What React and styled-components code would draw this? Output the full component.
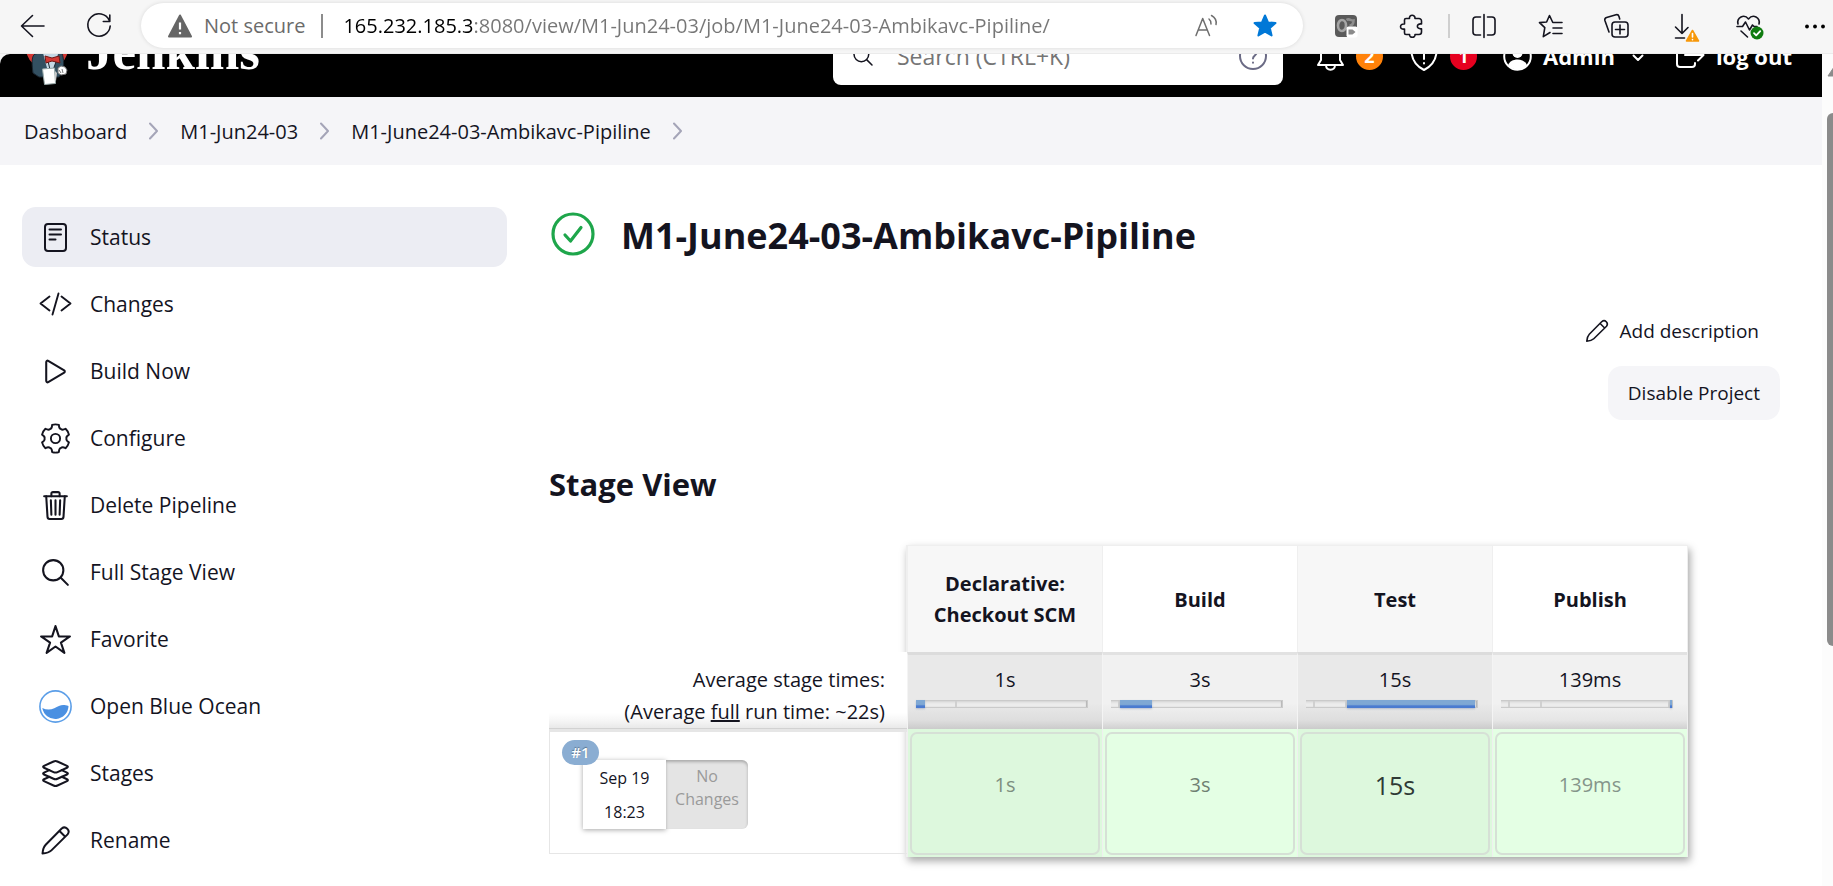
import React from "react";
import styled, { createGlobalStyle } from "styled-components";
import {
  IoPlayOutline,
  IoTrashOutline,
  IoSearchOutline,
  IoStarOutline,
  IoLayersOutline,
} from "react-icons/io5";

const ink = "#14141f";

const GlobalStyle = createGlobalStyle`
  *, *::before, *::after { box-sizing: border-box; }
  body {
    margin: 0;
    background: #fff;
    color: ${ink};
    font-family: "Open Sans", "Noto Sans", sans-serif;
    font-size: 20px;
  }
  button, input { font: inherit; color: inherit; }
  a { color: inherit; text-decoration: none; }
`;

/* ---------- browser chrome ---------- */

const BrowserWindow = styled.div`
  display: flex;
  flex-direction: column;
  height: 100vh;
  overflow: hidden;
  background: #f6f6f6;
`;

const Toolbar = styled.div`
  flex: none;
  display: flex;
  align-items: center;
  height: 54px;
  padding: 0 7px 2px 20px;
  border-bottom: 1px solid #ebebeb;
`;

const ToolButton = styled.button`
  display: flex;
  flex: none;
  padding: 0;
  border: 0;
  background: none;
  cursor: pointer;
  svg { display: block; overflow: visible; }
`;

const NavButtons = styled.div`
  display: flex;
  gap: 43px;
  margin-right: 30px;
`;

const ToolGroup = styled.div`
  display: flex;
  align-items: center;
  gap: 42px;
  margin-left: ${(p) => p.$before}px;
`;

const ToolDivider = styled.span`
  width: 2px;
  height: 24px;
  margin-left: 24px;
  background: #cfcfcf;
`;

const AddressBar = styled.div`
  flex: 1;
  min-width: 0;
  display: flex;
  align-items: center;
  height: 45px;
  padding: 0 26px 0 27px;
  border-radius: 23px;
  background: #fff;
  box-shadow: 0 0 4px rgba(0, 0, 0, 0.12);
`;

const Security = styled.button`
  display: flex;
  align-items: center;
  gap: 12px;
  flex: none;
  padding: 0 16px 0 0;
  border: 0;
  border-right: 2px solid #8c8c8c;
  background: none;
  color: #6b6b6b;
  line-height: 24px;
`;

const AddressInput = styled.input`
  flex: 1;
  min-width: 0;
  padding: 0;
  margin-left: 20px;
  border: 0;
  outline: 0;
  color: transparent;
  background: linear-gradient(to right, #000 130px, #767676 130px);
  background-clip: text;
  -webkit-background-clip: text;
`;

const AddressActions = styled.div`
  display: flex;
  gap: 34px;
`;

/* ---------- page viewport ---------- */

const Viewport = styled.div`
  flex: 1;
  min-height: 0;
  display: flex;
  overflow: hidden;
  border-top-left-radius: 10px;
  background: #fff;
`;

const Page = styled.div`
  flex: 1;
  min-width: 0;
`;

const ScrollTrack = styled.div`
  flex: none;
  width: 11px;
  padding: 12px 0 0 5px;
  overflow: hidden;
  background: #fcfcfc;
  svg { display: block; }
`;

const ScrollThumb = styled.div`
  width: 12px;
  height: 65%;
  margin-top: 36px;
  border-radius: 6px;
  background: #8b8b8b;
`;

const Header = styled.header`
  display: flex;
  align-items: center;
  height: 82px;
  margin-top: -39px;
  padding: 0 30px 0 24px;
  background: #000;
  color: #fff;
`;

const Brand = styled.a`
  display: flex;
  align-items: flex-start;
  gap: 6px;
  font: bold 53px/60px "Liberation Serif", serif;
`;

const SearchBox = styled.label`
  display: flex;
  align-items: center;
  gap: 22px;
  width: 450px;
  height: 58px;
  margin-left: auto;
  padding: 0 16px 0 18px;
  border-radius: 8px;
  background: #fff;
  color: ${ink};
`;

const SearchInput = styled.input`
  flex: 1;
  min-width: 0;
  padding: 0;
  border: 0;
  outline: 0;
  background: none;
  font-size: 23px;
  &::placeholder { color: #757575; opacity: 1; }
`;

const HeaderLink = styled.a`
  display: flex;
  align-items: center;
  gap: 11px;
  margin-left: ${(p) => p.$before}px;
  font-size: 22px;
  font-weight: 700;
  svg { display: block; }
`;

const Count = styled.span`
  width: 27px;
  height: 27px;
  border-radius: 50%;
  background: ${(p) => p.$color};
  font-size: 18px;
  line-height: 27px;
  text-align: center;
`;

const Breadcrumbs = styled.nav`
  display: flex;
  align-items: center;
  gap: 22px;
  height: 68px;
  padding-left: 24px;
  background: #f5f5f8;
  font-weight: 500;
`;

const Body = styled.div`
  display: flex;
  align-items: flex-start;
  gap: 42px;
  padding: 42px 42px 0 22px;
`;

/* ---------- sidebar ---------- */

const Sidebar = styled.nav`
  flex: none;
  display: flex;
  flex-direction: column;
  gap: 7px;
  width: 485px;
`;

const Task = styled.a`
  display: flex;
  align-items: center;
  gap: 18px;
  height: 60px;
  padding-left: 17px;
  border-radius: 14px;
  background: ${(p) => (p.$active ? "#ecedf3" : "transparent")};
  font-size: 21px;
  font-weight: 500;
  svg { width: 33px; height: 33px; flex: none; }
`;

/* ---------- main panel ---------- */

const Main = styled.main`
  flex: 1;
  min-width: 0;
`;

const TitleRow = styled.div`
  display: flex;
  align-items: center;
  gap: 24px;
  height: 54px;
`;

const Title = styled.h1`
  margin: 0;
  padding-top: 4px;
  font-size: 36px;
  line-height: 54px;
  font-weight: 700;
`;

const Actions = styled.div`
  display: flex;
  flex-direction: column;
  align-items: flex-end;
  gap: 8px;
  margin: 43px 0;
  font-size: 19px;
  font-weight: 500;
`;

const ActionLink = styled.a`
  display: flex;
  align-items: center;
  gap: 10px;
  height: 54px;
  padding: 0 21px;
  svg { width: 26px; height: 26px; }
`;

const ActionButton = styled.button`
  height: 54px;
  padding: 0 20px;
  border: 0;
  border-radius: 14px;
  background: #f5f5f8;
  font-weight: 500;
`;

const SectionTitle = styled.h2`
  margin: 0 0 40px;
  font-size: 31px;
  line-height: 42px;
  font-weight: 700;
`;

const StageFrame = styled.div`
  position: relative;
  width: 1138px;
  /* raised card behind the stage columns */
  &::before {
    content: "";
    position: absolute;
    inset: 0 -1px 0 357px;
    border: 1px solid #efefef;
    background: #f1f1f1;
    box-shadow: 2px 4px 8px rgba(0, 0, 0, 0.35);
  }
`;

const StageTable = styled.table`
  position: relative;
  width: 100%;
  table-layout: fixed;
  border-collapse: separate;
  border-spacing: 0;
  td, th { padding: 0; }
`;

const LabelCol = styled.col`
  width: 358px;
`;

const StageHead = styled.th`
  height: 107px;
  border: 1px solid #efefef;
  border-width: 1px 0 0 1px;
  background: ${(p) => (p.$odd ? "#f7f7f7" : "#fff")};
  font-size: 20px;
  line-height: 31px;
  font-weight: 700;
`;

const AverageLabel = styled.th`
  height: 77px;
  border-bottom: 1px solid #d2d2d2;
  background: linear-gradient(to bottom, #fff 80%, #f6f6f6 90%, #e9e9e9);
  text-align: right;
  line-height: 32px;
  font-weight: 400;
  div { padding: 12px 22px 0 0; }
`;

const AverageCell = styled.td`
  border-top: 3px solid ${(p) => (p.$odd ? "#dcdcdc" : "#e2e2e2")};
  border-left: 1px solid #f4f4f4;
  background: ${(p) =>
    p.$odd
      ? "linear-gradient(to bottom, #e9e9e9 65%, #dedede 88%, #cbcbcb)"
      : "linear-gradient(to bottom, #f1f1f1 65%, #e6e6e6 88%, #d0d0d0)"};
  vertical-align: top;
  text-align: center;
  line-height: 32px;
`;

const AverageTime = styled.div`
  padding-top: 9px;
`;

const Track = styled.div`
  display: flex;
  height: 8px;
  margin: 4px 14px 0 8px;
  border: 1px solid #cacaca;
  border-width: 1px 1px 1px 0;
  background: linear-gradient(to bottom, #dadada, #ececec 50%);
  box-shadow: inset -1px 0 1px #b5b5b5;
`;

const Lead = styled.span`
  height: 6px;
  border-right: 2px solid #d0d0d0;
`;

const Fill = styled.span`
  height: 8px;
  margin-top: -1px;
  background: linear-gradient(to bottom, #7fa8d4 55%, #4a7bd0 75%);
  box-shadow: 0 1px 2px rgba(60, 90, 150, 0.3);
`;

const RunLabel = styled.td`
  height: 128px;
  vertical-align: top;
`;

const RunInfo = styled.div`
  position: relative;
  height: 125px;
  padding: 28px 0 0 33px;
  border: 1px solid #e6e6e6;
  border-width: 3px 0 1px 1px;
`;

const RunBadge = styled.a`
  position: absolute;
  top: 8px;
  left: 12px;
  width: 37px;
  height: 25px;
  border-radius: 13px;
  background: #8aadd2;
  color: #fff;
  font-size: 15px;
  line-height: 25px;
  font-weight: 600;
  text-align: center;
  text-shadow: 0 -1px 1px rgba(0, 0, 0, 0.35);
`;

const RunBoxes = styled.div`
  display: flex;
  height: 69px;
  text-align: center;
  font-size: 16px;
`;

const RunDate = styled.div`
  width: 83px;
  padding-top: 1px;
  background: #fff;
  box-shadow: 0 1px 5px rgba(0, 0, 0, 0.35);
  line-height: 34px;
`;

const RunChanges = styled.div`
  width: 82px;
  padding-top: 5px;
  border-radius: 0 6px 6px 0;
  background: #e4e4e4;
  box-shadow: inset 0 2px 3px rgba(0, 0, 0, 0.25);
  color: #9a9a9a;
  line-height: 23px;
`;

const RunCell = styled.td`
  padding: 0;
  border-left: 1px solid #efefef;
  background: ${(p) => (p.$odd ? "#ddf8dd" : "#e4ffe4")};
  vertical-align: top;
`;

const RunResult = styled.div`
  height: 123px;
  margin: 3px 2px 2px;
  padding-top: 36px;
  border: 2px solid #d6e0d6;
  border-radius: 7px;
  background: ${(p) => (p.$odd ? "#ddf8dd" : "#e4ffe4")};
  color: ${(p) => p.$tone};
  font-size: ${(p) => (p.$large ? 25 : 20)}px;
  line-height: 30px;
  text-align: center;
`;

/* ---------- drawings ---------- */

const Line = ({ size = 24, box = 24, width = 1.6, children, ...rest }) => (
  <svg
    width={size}
    height={size}
    viewBox={`0 0 ${box} ${box}`}
    fill="none"
    stroke="currentColor"
    strokeWidth={width}
    strokeLinecap="round"
    strokeLinejoin="round"
    aria-hidden="true"
    {...rest}
  >
    {children}
  </svg>
);

const StatusIcon = () => (
  <Line box={33} width={2}>
    <rect x="6" y="3" width="21" height="27" rx="3" />
    <path d="M10.500 8.500h11.500M10.500 13.500h11.500M10.500 18.500h6" />
  </Line>
);

const ChangesIcon = () => (
  <Line box={33} width={1.9}>
    <path d="M10.500 8.500L1.500 15.500l9 7M22.500 8.500l9 7-9 7M19.500 5.500l-6 21" />
  </Line>
);

const gearPath = () => {
  const at = (deg, r) => {
    const a = (deg * Math.PI) / 180;
    return `${(16.5 + r * Math.sin(a)).toFixed(2)} ${(16.5 - r * Math.cos(a)).toFixed(2)}`;
  };
  let d = "";
  for (let k = 0; k < 360; k += 60) {
    d += `${k ? "L" : "M"}${at(k - 14, 14)}Q${at(k, 14.6)} ${at(k + 14, 14)}`;
    d += `Q${at(k + 19, 10.6)} ${at(k + 30, 10.9)}Q${at(k + 41, 10.6)} ${at(k + 46, 14)}`;
  }
  return `${d}Z`;
};

const GearIcon = () => (
  <Line box={33} width={1.9}>
    <path d={gearPath()} />
    <circle cx="16.5" cy="16.5" r="4.6" />
  </Line>
);

const PencilIcon = () => (
  <Line box={33} width={2}>
    <path d="M3.500 29.500c.3-4 1-6.500 3.200-8.800L22.700 4.500a4.200 4.200 0 0 1 5.900 5.900L12.400 26.400c-2.300 2.200-4.900 2.800-8.900 3.100zM20.500 7l5.700 5.700" />
  </Line>
);

const OceanIcon = () => (
  <svg viewBox="0 0 33 33" aria-hidden="true">
    <circle cx="16.500" cy="16.500" r="15.600" fill="#fff" stroke="#5b9ee8" strokeWidth="1.600" />
    <path d="M3.300 18c4 2 8 2.200 12 .2 5-2.700 8-4.500 14.200-2.200A13.200 13.200 0 0 1 3.300 18z" fill="#4a90e2" />
  </svg>
);

const SuccessIcon = () => (
  <svg width="48" height="48" viewBox="0 0 48 48" fill="none" stroke="#1ea64b" aria-hidden="true">
    <circle cx="24" cy="24" r="20" strokeWidth="3.200" />
    <path d="M16 25l5.500 6L32 17.500" strokeWidth="3.200" strokeLinecap="round" strokeLinejoin="round" />
  </svg>
);

const Chevron = () => (
  <svg width="9" height="18" viewBox="0 0 9 18" fill="none" stroke="#a5a5b8" strokeWidth="2" aria-hidden="true">
    <path d="M1 1.500L8 9l-7 7.500" strokeLinecap="round" strokeLinejoin="round" />
  </svg>
);

const JenkinsHead = () => (
  <svg width="56" height="70" viewBox="0 0 56 70" aria-hidden="true">
    <circle cx="23" cy="27" r="21" fill="#d33833" />
    <path d="M12 10c2-11 22-11 24 0v14c-2 10-20 10-24 0z" fill="#f0d6b7" stroke="#231f20" />
    <path d="M11 33c-4 2-3 12-2 19l6 4h20l4-6c1-7 1-14-2-20l-7-2-9 3z" fill="#335061" stroke="#1b2630" />
    <path d="M19 32l4 15h7l4-14z" fill="#c5d8e4" />
    <path d="M24 40l3 13M33 38l-5 14" stroke="#1b2630" fill="none" />
    <path d="M21 35l7 2 7-2 1 7-8-2-6 2z" fill="#d33833" stroke="#701815" />
    <path d="M18.500 48l12-1 1 15.500-11 1z" fill="#fff" stroke="#9aa" />
    <path d="M31 50l2 2-1 8-1-1z" fill="#c9c9c9" />
    <path d="M34 47l3-2 4 1 2 3-1 4-5 1-3-2z" fill="#fff" stroke="#777" />
    <path d="M38 48l1 4M35 49l2 3" stroke="#777" />
  </svg>
);

const starPath =
  "M12 1.500l3 6.900 7.500.7-5.700 5 1.800 7.400L12 17.700l-6.600 3.800 1.800-7.400-5.700-5 7.500-.7z";

const tasks = [
  ["Status", StatusIcon],
  ["Changes", ChangesIcon],
  ["Build Now", IoPlayOutline],
  ["Configure", GearIcon],
  ["Delete Pipeline", IoTrashOutline],
  ["Full Stage View", IoSearchOutline],
  ["Favorite", IoStarOutline],
  ["Open Blue Ocean", OceanIcon],
  ["Stages", IoLayersOutline],
  ["Rename", PencilIcon],
];

const crumbs = ["Dashboard", "M1-Jun24-03", "M1-June24-03-Ambikavc-Pipiline"];

const stages = [
  { name: "Declarative: Checkout SCM", time: "1s", leads: [], share: 5, rest: [19], tone: "#7d8f80" },
  { name: "Build", time: "3s", leads: [5], share: 19, rest: [], tone: "#6f8072" },
  { name: "Test", time: "15s", leads: [5, 19], share: 75, rest: [], tone: "#2f3a35" },
  { name: "Publish", time: "139ms", leads: [5, 19, 75], share: 1, rest: [], tone: "#84958a" },
];

function BrowserToolbar() {
  return (
    <Toolbar>
      <NavButtons>
        <ToolButton aria-label="Back">
          <Line><path d="M12.500 1.500L1.500 12l11 10.500M1.500 12H24" /></Line>
        </ToolButton>
        <ToolButton aria-label="Refresh">
          <Line><path d="M22.300 6.500A11.200 11.200 0 1 0 23.200 12M22.800 1v6.500h-6.500" /></Line>
        </ToolButton>
      </NavButtons>
      <AddressBar>
        <Security>
          <svg width="24" height="24" viewBox="0 0 24 24" aria-hidden="true">
            <path d="M12 1.500L23 22.500H1z" fill="#666" stroke="#666" strokeWidth="2" strokeLinejoin="round" />
            <path d="M12 8.500v7M12 18v2.200" stroke="#fff" strokeWidth="2.200" />
          </svg>
          Not secure
        </Security>
        <AddressInput
          aria-label="Address"
          defaultValue="165.232.185.3:8080/view/M1-Jun24-03/job/M1-June24-03-Ambikavc-Pipiline/"
        />
        <AddressActions>
          <ToolButton aria-label="Read aloud">
            <Line width={1.5} color="#6e6e6e">
              <path d="M1 21.500L7.700 4.500 14.500 21.500M3.500 16h8.500M14 5c1.500 1.200 2.200 2.800 2 5M16.500 1.500c3.500 2 5.300 5 4.500 9" />
            </Line>
          </ToolButton>
          <ToolButton aria-label="Favorite">
            <Line width={2} color="#0078d7"><path d={starPath} fill="#0078d7" /></Line>
          </ToolButton>
        </AddressActions>
      </AddressBar>
      <ToolGroup $before={31}>
        <ToolButton aria-label="Extension">
          <svg width="24" height="24" viewBox="0 0 24 24" aria-hidden="true">
            <rect x="1" y="1" width="22" height="22" rx="4" fill="#5a5a5a" />
            <ellipse cx="8" cy="11.500" rx="4" ry="5.500" fill="none" stroke="#a5a5a5" strokeWidth="2.600" />
            <path d="M12.500 6c3-2 4 1 7 .5 0 3-1 5-4 5" fill="none" stroke="#8f8f8f" strokeWidth="2.600" />
            <rect x="12.500" y="12.500" width="11" height="11" rx="2" fill="#fff" />
            <path d="M14.500 15.500h4l3 2.500-3 2.500h-4z" fill="#8a8a8a" />
          </svg>
        </ToolButton>
        <ToolButton aria-label="Extensions">
          <Line>
            <path d="M6 4.500h3.500c-.8-4.300 6-4.300 5.500 0h4a2.500 2.500 0 0 1 2.500 2.500v3c-5.500-.9-5.500 5.500 0 4.800v3.200a2.500 2.500 0 0 1-2.500 2.500h-4c.6 3.600-6 3.600-5.400 0H6a1.500 1.500 0 0 1-1.500-1.500v-4c-5.300 1-5.300-5.600 0-5V6A1.500 1.500 0 0 1 6 4.500z" />
          </Line>
        </ToolButton>
      </ToolGroup>
      <ToolDivider />
      <ToolGroup $before={22}>
        <ToolButton aria-label="Split screen">
          <Line>
            <path d="M12 .500v23M8.500 3H4a3 3 0 0 0-3 3v12a3 3 0 0 0 3 3h4.500M15.500 3H20a3 3 0 0 1 3 3v12a3 3 0 0 1-3 3h-4.500" />
          </Line>
        </ToolButton>
        <ToolButton aria-label="Favorites">
          <Line>
            <path d="M16.500 8.500H14.800L11.500 1.500 8.600 8 1.500 8.600l5.300 5-1.500 9L12 18.500M15.500 8.500H24M15 14h9M15 19.500h9" />
          </Line>
        </ToolButton>
        <ToolButton aria-label="Collections">
          <Line>
            <rect x="8" y="8" width="16" height="15" rx="3" />
            <path d="M16 11v9M11.500 15.500h9M5 18L.900 6.500a2.500 2.500 0 0 1 1.700-3L12 .800a2.500 2.500 0 0 1 3 1.700l.700 2.500" />
          </Line>
        </ToolButton>
        <ToolButton aria-label="Downloads">
          <Line>
            <path d="M12 .500v19M5.500 13l6.500 6.500L18 13.500M5.500 24h9" />
            <path d="M22.500 16.500l6 10.500h-12z" fill="#f7980a" stroke="#f7980a" />
            <path d="M22.500 19.500v3.500M22.500 25.500v.300" stroke="#fff" />
          </Line>
        </ToolButton>
        <ToolButton aria-label="Browser essentials">
          <Line>
            <path d="M2 10C.500 3.500 8-.500 12.500 5 17-.500 24.500 3.500 23 10M1 12.500h5.500L9.500 8l4 8 3-5 1.500 1.500h3M5 17l6.500 6" />
            <circle cx="21" cy="19" r="6.500" fill="#107c10" stroke="none" />
            <path d="M18 19.200l2.200 2.200 4-4.300" stroke="#fff" strokeWidth="1.800" />
          </Line>
        </ToolButton>
        <ToolButton aria-label="Settings and more">
          <svg width="24" height="24" viewBox="0 0 24 24" aria-hidden="true">
            <circle cx="5" cy="12.500" r="1.900" />
            <circle cx="13" cy="12.500" r="1.900" />
            <circle cx="21" cy="12.500" r="1.900" />
          </svg>
        </ToolButton>
      </ToolGroup>
    </Toolbar>
  );
}

function PageHeader() {
  return (
    <Header>
      <Brand href="#home">
        <JenkinsHead />
        Jenkins
      </Brand>
      <SearchBox>
        <IoSearchOutline size={24} />
        <SearchInput placeholder="Search (CTRL+K)" aria-label="Search" />
        <ToolButton aria-label="Search help">
          <Line size={28} box={28} width={2} color="#6b6b85">
            <circle cx="14" cy="14" r="13" />
            <path d="M10.500 11c0-5 7.500-4.500 7 0-.300 2.500-3.500 2.500-3.500 5.500M14 20.500v.300" />
          </Line>
        </ToolButton>
      </SearchBox>
      <HeaderLink href="#notices" $before={33}>
        <Line size={29} box={29} width={2}>
          <path d="M2 23l3-5v-7c0-12 19-12 19 0v7l3 5zM10 23.500c.500 5.500 8.500 5.500 9 0" />
        </Line>
        <Count $color="#ff820a">2</Count>
      </HeaderLink>
      <HeaderLink href="#security" $before={26}>
        <Line size={30} box={30} width={2}>
          <path d="M15 1.500c4 3 8 3.500 12.500 3.800C28.500 16 25 24 15 29 5 24 1.500 16 2.500 5.300 7 5 11 4.500 15 1.500zM15 9v9M15 22v.500" />
        </Line>
        <Count $color="#e6001f">1</Count>
      </HeaderLink>
      <HeaderLink href="#user" $before={26}>
        <svg width="29" height="29" viewBox="0 0 29 29" aria-hidden="true">
          <circle cx="14.500" cy="14.500" r="13.300" fill="none" stroke="#fff" strokeWidth="2" />
          <circle cx="14.500" cy="11" r="5" fill="#fff" />
          <path d="M5 23.500c2-8 17-8 19 0a13 13 0 0 1-19 0z" fill="#fff" />
        </svg>
        Admin
      </HeaderLink>
      <HeaderLink href="#menu" aria-label="User menu" $before={17}>
        <Line size={12} box={12} width={2}><path d="M1.500 5.500L6 10l4.500-4.500" /></Line>
      </HeaderLink>
      <HeaderLink href="#logout" $before={31}>
        <Line size={30} box={30} width={2}>
          <path d="M20 5.500V5a3 3 0 0 0-3-3H5a3 3 0 0 0-3 3v18a3 3 0 0 0 3 3h12a3 3 0 0 0 3-3v-1M10 14h18M23 8.500l5.500 5.500-5.500 5.500" />
        </Line>
        log out
      </HeaderLink>
    </Header>
  );
}

function StageView() {
  return (
    <StageFrame>
      <StageTable>
        <colgroup>
          <LabelCol />
          {stages.map((s) => <col key={s.name} />)}
        </colgroup>
        <thead>
          <tr>
            <td />
            {stages.map((s, i) => (
              <StageHead key={s.name} scope="col" $odd={i % 2 === 0}>{s.name}</StageHead>
            ))}
          </tr>
        </thead>
        <tbody>
          <tr>
            <AverageLabel scope="row">
              <div>
                Average stage times:
                <br />
                (Average <u>full</u> run time: ~22s)
              </div>
            </AverageLabel>
            {stages.map((s, i) => (
              <AverageCell key={s.name} $odd={i % 2 === 0}>
                <AverageTime>{s.time}</AverageTime>
                <Track>
                  {s.leads.map((w) => <Lead key={w} style={{ width: `${w}%` }} />)}
                  <Fill style={{ width: `${s.share}%` }} />
                  {s.rest.map((w) => <Lead key={w} style={{ width: `${w}%` }} />)}
                </Track>
              </AverageCell>
            ))}
          </tr>
          <tr>
            <RunLabel>
              <RunInfo>
                <RunBoxes>
                  <RunDate>
                    Sep 19
                    <br />
                    18:23
                  </RunDate>
                  <RunChanges>No Changes</RunChanges>
                </RunBoxes>
                <RunBadge href="#1">#1</RunBadge>
              </RunInfo>
            </RunLabel>
            {stages.map((s, i) => (
              <RunCell key={s.name} $odd={i % 2 === 0}>
                <RunResult $odd={i % 2 === 0} $tone={s.tone} $large={s.name === "Test"}>
                  {s.time}
                </RunResult>
              </RunCell>
            ))}
          </tr>
        </tbody>
      </StageTable>
    </StageFrame>
  );
}

export default function App() {
  return (
    <BrowserWindow>
      <GlobalStyle />
      <BrowserToolbar />
      <Viewport>
        <Page>
          <PageHeader />
          <Breadcrumbs aria-label="Breadcrumb">
            {crumbs.map((c) => (
              <React.Fragment key={c}>
                <a href="#crumb">{c}</a>
                <Chevron />
              </React.Fragment>
            ))}
          </Breadcrumbs>
          <Body>
            <Sidebar aria-label="Tasks">
              {tasks.map(([label, Icon], i) => (
                <Task key={label} href="#task" $active={i === 0}>
                  <Icon />
                  {label}
                </Task>
              ))}
            </Sidebar>
            <Main>
              <TitleRow>
                <SuccessIcon />
                <Title>M1-June24-03-Ambikavc-Pipiline</Title>
              </TitleRow>
              <Actions>
                <ActionLink href="#description">
                  <PencilIcon />
                  Add description
                </ActionLink>
                <ActionButton>Disable Project</ActionButton>
              </Actions>
              <SectionTitle>Stage View</SectionTitle>
              <StageView />
            </Main>
          </Body>
        </Page>
        <ScrollTrack>
          <svg width="14" height="11" viewBox="0 0 14 11" aria-hidden="true">
            <path d="M7 1l6 9H1z" fill="#8b8b8b" stroke="#8b8b8b" strokeLinejoin="round" />
          </svg>
          <ScrollThumb />
        </ScrollTrack>
      </Viewport>
    </BrowserWindow>
  );
}
